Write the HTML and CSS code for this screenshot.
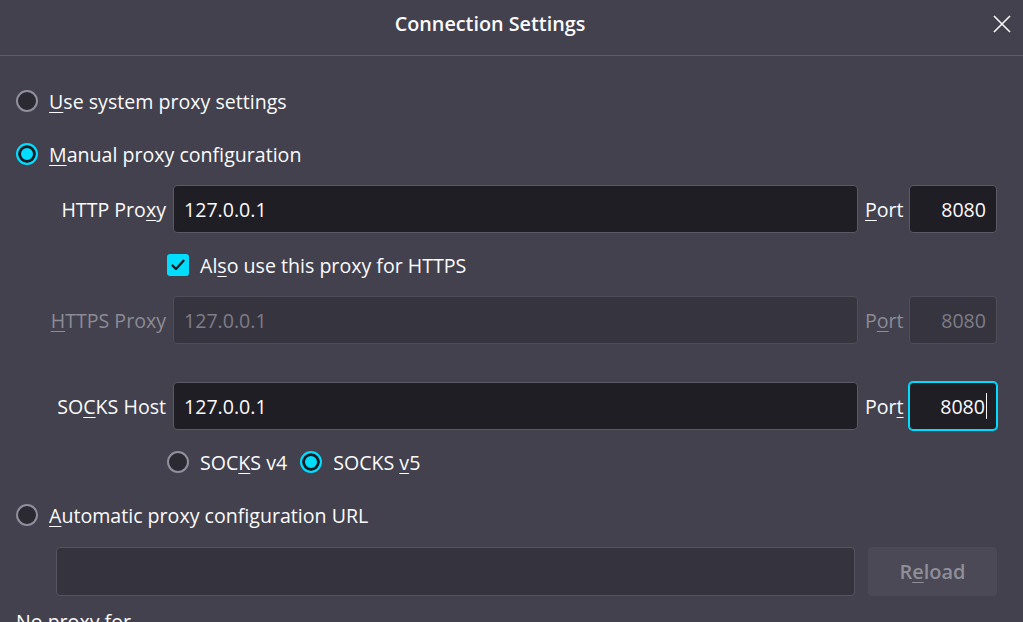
FILE: index.html
```html
<!DOCTYPE html>
<html lang="en">
<head>
<meta charset="utf-8">
<title>Connection Settings</title>
<link rel="stylesheet" href="styles.css">
</head>
<body>
<div class="dialog">
  <header class="dialog-header">
    <h1 class="title">Connection Settings</h1>
    <button class="close" aria-label="Close">
      <svg width="18" height="18" viewBox="0 0 18 18"><path d="M1 1 L17 17 M17 1 L1 17" stroke="#fbfbfe" stroke-width="1.6" fill="none"/></svg>
    </button>
  </header>
  <main class="content">
    <label class="radio-row row-system"><span class="radio"></span><span><u>U</u>se system proxy settings</span></label>
    <label class="radio-row row-manual"><span class="radio checked"></span><span><u>M</u>anual proxy configuration</span></label>

    <div class="proxy-grid grid-http">
      <span class="field-label">HTTP Pro<u>x</u>y</span>
      <div class="input">127.0.0.1</div>
      <span class="port-label"><u>P</u>ort</span>
      <div class="input port">8080</div>
    </div>

    <label class="check-row"><span class="checkbox"><svg width="14" height="12" viewBox="0 0 14 12"><path d="M1.5 6.5 L5 10 L12.5 1.8" stroke="#1c1b22" stroke-width="2.4" fill="none" stroke-linecap="round" stroke-linejoin="round"/></svg></span><span>Al<u>s</u>o use this proxy for HTTPS</span></label>

    <div class="proxy-grid grid-https disabled">
      <span class="field-label"><u>H</u>TTPS Proxy</span>
      <div class="input">127.0.0.1</div>
      <span class="port-label">P<u>o</u>rt</span>
      <div class="input port">8080</div>
    </div>

    <div class="proxy-grid grid-socks">
      <span class="field-label">SO<u>C</u>KS Host</span>
      <div class="input">127.0.0.1</div>
      <span class="port-label">Por<u>t</u></span>
      <div class="input port focused">8080<span class="caret"></span></div>
    </div>

    <div class="socks-version">
      <label class="radio-row small"><span class="radio"></span><span>SOC<u>K</u>S v4</span></label>
      <label class="radio-row small"><span class="radio checked"></span><span>SOCKS <u>v</u>5</span></label>
    </div>

    <label class="radio-row row-auto"><span class="radio"></span><span><u>A</u>utomatic proxy configuration URL</span></label>

    <div class="url-row">
      <div class="input url-input"></div>
      <button class="reload">R<u>e</u>load</button>
    </div>

    <div class="noproxy">No proxy for</div>
  </main>
</div>
</body>
</html>
```

FILE: styles.css
```css
* { box-sizing: border-box; }
html, body {
  margin: 0;
  padding: 0;
  background: #42414d;
  height: 622px;
  overflow: hidden;
}
body {
  font-family: "Open Sans", "Noto Sans", sans-serif;
  font-size: 19.6px;
  color: #fbfbfe;
}
u { text-decoration: underline; text-underline-offset: 3px; text-decoration-thickness: 1px; }

.dialog-header {
  height: 56px;
  border-bottom: 1px solid #5e5d68;
  display: flex;
  align-items: center;
}
.title {
  flex: 1;
  margin: 0;
  text-align: center;
  font-size: 19.8px;
  font-weight: 600;
  padding-bottom: 8px;
}
.close {
  width: 43px;
  height: 40px;
  background: none;
  border: none;
  padding: 0 0 8px 0;
  display: flex;
  align-items: center;
  justify-content: center;
}

.content {
  padding: 0 26px 0 16px;
  display: flex;
  flex-direction: column;
}

.radio-row {
  display: flex;
  align-items: center;
  height: 22px;
  gap: 11px;
  white-space: nowrap;
}
.radio {
  width: 22px;
  height: 22px;
  border-radius: 50%;
  border: 2px solid #8f8f9d;
  background: #2b2a33;
  flex: none;
}
.radio.checked {
  border-color: #00ddff;
  background: #00ddff;
  box-shadow: inset 0 0 0 3px #1c1b22;
}
.row-system { margin-top: 34px; }
.row-manual { margin-top: 31px; }

.proxy-grid {
  display: grid;
  grid-template-columns: 150px 685px 37px 88px;
  column-gap: 7px;
  align-items: center;
  height: 48px;
}
.grid-http { margin-top: 20px; }
.grid-https { margin-top: 20px; }
.grid-socks { margin-top: 38px; }

.field-label, .port-label { white-space: nowrap; }
.field-label { text-align: right; }

.input {
  height: 48px;
  border: 1px solid #5b5a64;
  border-radius: 4px;
  background: #1f1e25;
  padding: 0 10px;
  display: flex;
  align-items: center;
  color: #fbfbfe;
}
.input.port { justify-content: flex-end; }
.input.focused {
  border-color: #00ddff;
  box-shadow: 0 0 0 1px #00ddff;
  padding-right: 9px;
}
.caret {
  display: inline-block;
  width: 1px;
  height: 26px;
  background: #fbfbfe;
  margin-left: 1px;
}
.disabled .field-label, .disabled .port-label { color: #8c8b96; }
.disabled .input {
  background: #36353f;
  border-color: #4f4e58;
  color: #7d7c87;
}

.check-row {
  display: flex;
  align-items: center;
  height: 22px;
  gap: 11px;
  margin-top: 21px;
  padding-left: 151px;
}
.checkbox {
  width: 22px;
  height: 22px;
  border-radius: 3px;
  background: #00ddff;
  display: flex;
  align-items: center;
  justify-content: center;
}

.socks-version {
  display: flex;
  gap: 13px;
  margin-top: 21px;
  padding-left: 151px;
}
.row-auto { margin-top: 31px; }

.url-row {
  display: flex;
  margin-top: 21px;
  padding-left: 40px;
  gap: 13px;
  height: 49px;
}
.url-input {
  width: 799px;
  height: 49px;
  background: #35343e;
  border-color: #55545e;
}
.reload {
  width: 129px;
  height: 49px;
  border: none;
  border-radius: 4px;
  background: #4a4955;
  color: #8f8e99;
  font-family: inherit;
  font-size: 20px;
  font-weight: 600;
}
.noproxy {
  margin-top: 12px;
  white-space: nowrap;
}
```
